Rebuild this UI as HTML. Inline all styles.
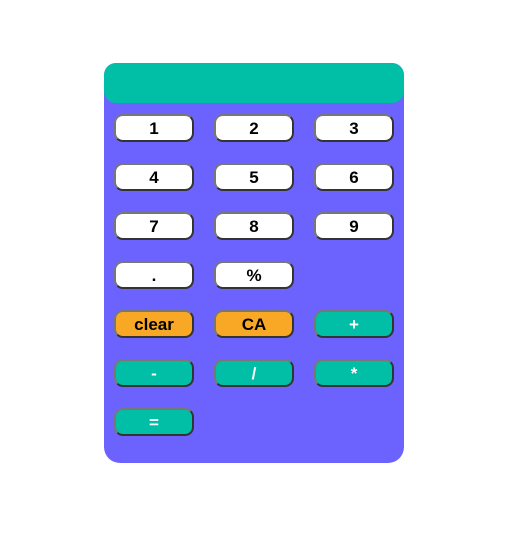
<!DOCTYPE html>
<html><head><style>
body{margin:0;width:526px;height:547px;background:#fff;position:relative;font-family:"Liberation Sans",Arial,sans-serif}
.calc{position:absolute;left:104px;top:63px;width:300px;height:400px;background:#6c63ff;border-radius:12px 12px 16px 16px;overflow:hidden}
.hd{position:absolute;left:0;top:0;width:300px;height:40px;background:#00bfa6;border-radius:12px}
.b{position:absolute;width:80px;height:28px;box-sizing:border-box;border:2px solid;border-color:#777 #333 #333 #777;border-radius:9px;background:#fff;font-weight:bold;font-size:17px;text-align:center;line-height:26px;color:#000}
.o{background:#f9a826}.t{background:#00bfa6;color:#fff}
</style></head><body>
<div class="calc"><div class="hd"></div>
<div class="b" style="left:10px;top:51px">1</div>
<div class="b" style="left:110px;top:51px">2</div>
<div class="b" style="left:210px;top:51px">3</div>
<div class="b" style="left:10px;top:100px">4</div>
<div class="b" style="left:110px;top:100px">5</div>
<div class="b" style="left:210px;top:100px">6</div>
<div class="b" style="left:10px;top:149px">7</div>
<div class="b" style="left:110px;top:149px">8</div>
<div class="b" style="left:210px;top:149px">9</div>
<div class="b" style="left:10px;top:198px">.</div>
<div class="b" style="left:110px;top:198px">%</div>
<div class="b o" style="left:10px;top:247px">clear</div>
<div class="b o" style="left:110px;top:247px">CA</div>
<div class="b t" style="left:210px;top:247px">+</div>
<div class="b t" style="left:10px;top:296px">-</div>
<div class="b t" style="left:110px;top:296px">/</div>
<div class="b t" style="left:210px;top:296px">*</div>
<div class="b t" style="left:10px;top:345px">=</div>
</div>
</body></html>
